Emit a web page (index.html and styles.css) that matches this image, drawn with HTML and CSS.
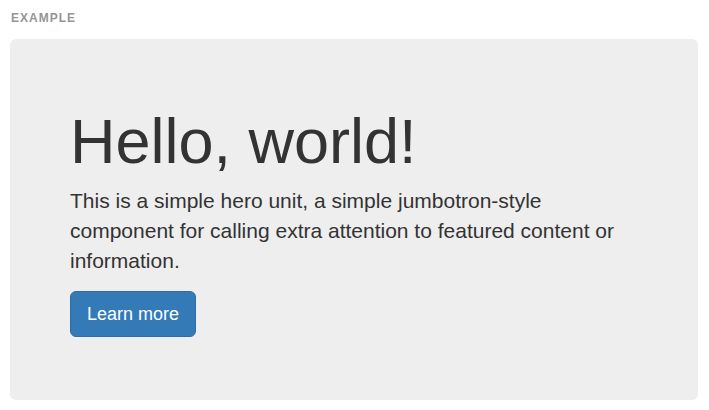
FILE: index.html
```html
<!DOCTYPE html>
<html>
<head>
<meta charset="utf-8">
<link rel="stylesheet" href="styles.css">
</head>
<body>
<div class="page">
  <div class="label">Example</div>
  <div class="jumbotron">
    <h1>Hello, world!</h1>
    <p>This is a simple hero unit, a simple jumbotron-style component for calling extra attention to featured content or information.</p>
    <p><a class="btn" href="#">Learn more</a></p>
  </div>
</div>
</body>
</html>
```
FILE: styles.css
```css
html, body {
  margin: 0;
  padding: 0;
  background: #fff;
}
body {
  font-family: "Liberation Sans", Arial, sans-serif;
  color: #333;
}
.page {
  padding: 10px 11px 10px 10px;
}
.label {
  font-size: 12px;
  line-height: 17px;
  font-weight: 700;
  color: #959595;
  text-transform: uppercase;
  letter-spacing: 1px;
  margin: 0 0 12px 1px;
}
.jumbotron {
  background: #eee;
  border-radius: 6px;
  padding: 48px 60px;
}
.jumbotron h1 {
  font-size: 63px;
  line-height: 1.1;
  font-weight: 500;
  margin: 20px 0 10px;
}
.jumbotron p {
  font-size: 21px;
  line-height: 30px;
  margin: 0 0 15px;
}
.btn {
  display: inline-block;
  padding: 10px 16px;
  font-size: 18px;
  line-height: 24px;
  border: 1px solid #2e6da4;
  border-radius: 6px;
  background: #337ab7;
  color: #fff;
  text-decoration: none;
  vertical-align: baseline;
}
```
